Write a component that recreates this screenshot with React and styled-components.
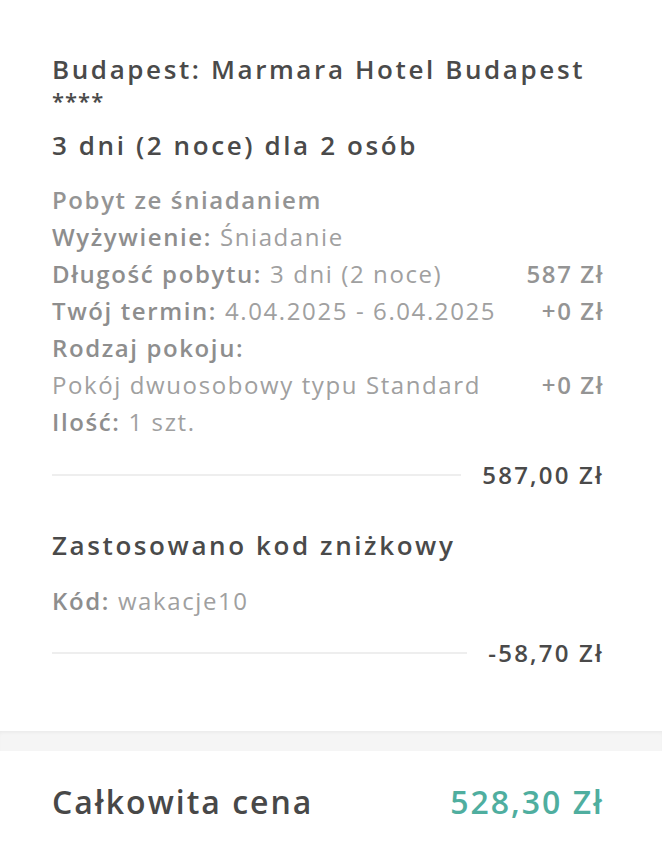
import React from "react";
import styled, { createGlobalStyle } from "styled-components";

const Global = createGlobalStyle`
  html, body { margin: 0; padding: 0; background: #ffffff; }
  body { font-family: "Open Sans", "Noto Sans", sans-serif; -webkit-font-smoothing: antialiased; }
`;

const Page = styled.div`
  width: 662px;
  display: flex;
  flex-direction: column;
`;

const Card = styled.section`
  padding: 50px 60px 62px 52px;
  background: #fff;
  border-radius: 0 0 8px 8px;
`;

const Title = styled.h2`
  margin: 0;
  font-size: 26px;
  line-height: 38px;
  font-weight: 600;
  letter-spacing: 2.6px;
  color: #4a4a4a;
`;

const Stars = styled.span`
  display: block;
  line-height: 24px;
  height: 38px;
  font-size: 22px;
  letter-spacing: 1px;
`;

const Details = styled.div`
  margin-top: ${(p) => p.$top}px;
  display: flex;
  flex-direction: column;
`;

const Row = styled.div`
  display: flex;
  justify-content: space-between;
  align-items: center;
  height: 37px;
  font-size: 24px;
  letter-spacing: 1.6px;
  color: #999999;
`;

const Label = styled.span`
  font-weight: 600;
  color: #8e8e8e;
  margin-right: 8px;
`;

const Value = styled.span`
  font-weight: 400;
  color: #a0a0a0;
`;

const Price = styled.span`
  font-weight: 600;
  color: #949494;
  margin-right: -2px;
`;

const TotalRow = styled.div`
  display: flex;
  align-items: center;
  gap: 21px;
  margin-top: ${(p) => p.$top}px;
`;

const Divider = styled.div`
  flex: 1;
  height: 2px;
  background: #eeeeee;
`;

const Sum = styled.span`
  font-size: 24px;
  font-weight: 600;
  letter-spacing: 2.2px;
  margin-right: -2px;
  color: #4a4a4a;
`;

const Heading = styled.h3`
  margin: 35px 0 0;
  font-size: 26px;
  line-height: 38px;
  font-weight: 600;
  letter-spacing: 2.6px;
  color: #4a4a4a;
`;

const Band = styled.div`
  height: 20px;
  background: #f5f5f5;
  box-shadow: inset 0 3px 4px -2px rgba(0, 0, 0, 0.06);
`;

const Footer = styled.footer`
  display: flex;
  justify-content: space-between;
  align-items: center;
  padding: 29px 60px 29px 52px;
  background: #fff;
`;

const FooterLabel = styled.span`
  font-size: 32px;
  font-weight: 600;
  letter-spacing: 2px;
  color: #484848;
`;

const FooterPrice = styled.span`
  font-size: 32px;
  font-weight: 600;
  letter-spacing: 2px;
  margin-right: -2px;
  color: #4fae9f;
`;

export default function App() {
  return (
    <Page>
      <Global />
      <Card>
        <Title>
          Budapest: Marmara Hotel Budapest
          <Stars>****</Stars>
          3 dni (2 noce) dla 2 osób
        </Title>
        <Details $top={17}>
          <Row><Price>Pobyt ze śniadaniem</Price></Row>
          <Row><span><Label>Wyżywienie:</Label><Value>Śniadanie</Value></span></Row>
          <Row><span><Label>Długość pobytu:</Label><Value>3 dni (2 noce)</Value></span><Price>587 Zł</Price></Row>
          <Row><span><Label>Twój termin:</Label><Value>4.04.2025 - 6.04.2025</Value></span><Price>+0 Zł</Price></Row>
          <Row><span><Label>Rodzaj pokoju:</Label></span></Row>
          <Row><Value>Pokój dwuosobowy typu Standard</Value><Price>+0 Zł</Price></Row>
          <Row><span><Label>Ilość:</Label><Value>1 szt.</Value></span></Row>
        </Details>
        <TotalRow $top={18}>
          <Divider />
          <Sum>587,00 Zł</Sum>
        </TotalRow>
        <Heading>Zastosowano kod zniżkowy</Heading>
        <Details $top={18}>
          <Row><span><Label>Kód:</Label><Value>wakacje10</Value></span></Row>
        </Details>
        <TotalRow $top={17}>
          <Divider />
          <Sum>-58,70 Zł</Sum>
        </TotalRow>
      </Card>
      <Band />
      <Footer>
        <FooterLabel>Całkowita cena</FooterLabel>
        <FooterPrice>528,30 Zł</FooterPrice>
      </Footer>
    </Page>
  );
}
